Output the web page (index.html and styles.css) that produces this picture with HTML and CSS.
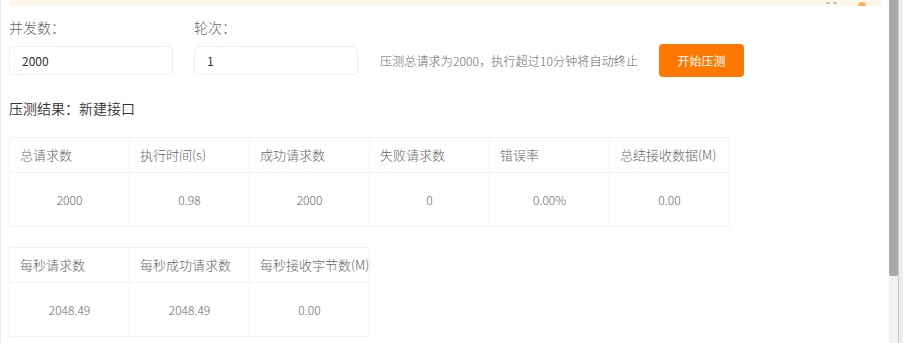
FILE: index.html
```html
<!DOCTYPE html>
<html lang="zh-CN">

<head>
  <meta charset="UTF-8" />
  <meta name="viewport" content="width=device-width, initial-scale=1.0" />
  <title>压测</title>
  <link rel="stylesheet" href="styles.css">
</head>

<body>
  <div class="app">
    <div class="main">
      <div class="notice">
        <span class="notice-mark"></span>
        <span class="notice-mark"></span>
        <span class="notice-icon"></span>
      </div>

      <div class="form-grid">
        <div class="label">并发数：</div>
        <div class="label">轮次：</div>
        <div></div>
        <div></div>
        <input class="input" type="text" value="2000" />
        <input class="input" type="text" value="1" />
        <div class="hint">压测总请求为2000，执行超过10分钟将自动终止</div>
        <div class="btn">开始压测</div>
      </div>

      <div class="result-title">压测结果：新建接口</div>

      <div class="stat-table cols-6">
        <div class="th">总请求数</div>
        <div class="th">执行时间(s)</div>
        <div class="th">成功请求数</div>
        <div class="th">失败请求数</div>
        <div class="th">错误率</div>
        <div class="th">总结接收数据(M)</div>
        <div class="td">2000</div>
        <div class="td">0.98</div>
        <div class="td">2000</div>
        <div class="td">0</div>
        <div class="td">0.00%</div>
        <div class="td">0.00</div>
      </div>

      <div class="stat-table cols-3">
        <div class="th">每秒请求数</div>
        <div class="th">每秒成功请求数</div>
        <div class="th">每秒接收字节数(M)</div>
        <div class="td">2048.49</div>
        <div class="td">2048.49</div>
        <div class="td">0.00</div>
      </div>
    </div>

    <div class="scrollbar">
      <div class="scroll-track">
        <div class="scroll-thumb"></div>
      </div>
      <div class="scroll-outer"></div>
    </div>
  </div>
</body>

</html>
```

FILE: styles.css
```css
* {
  padding: 0;
  margin: 0;
  box-sizing: border-box;
}

body {
  font-family: "Noto Sans CJK SC", "Liberation Sans", sans-serif;
  color: #666;
  background-color: #fff;
}

.app {
  display: flex;
  height: 343px;
  overflow: hidden;
}

.main {
  flex: 1;
  padding: 0 8px;
  border-left: 1px solid #e8e8e8;
}

.notice {
  display: flex;
  justify-content: flex-end;
  align-items: flex-end;
  height: 6px;
  padding-right: 15px;
  overflow: hidden;
  background-color: #fff6ea;
}

.notice-mark {
  width: 4px;
  height: 2px;
  margin-right: 3px;
  margin-bottom: 2px;
  background-color: #c8c2bb;
}

.notice-mark:nth-child(2) {
  margin-right: 21px;
}

.notice-icon {
  width: 8px;
  height: 8px;
  margin-bottom: -4px;
  border-radius: 50%;
  background-color: #f7b45a;
}

.form-grid {
  display: grid;
  grid-template-columns: 164px 164px auto auto;
  grid-template-rows: 20px 33px;
  column-gap: 21px;
  row-gap: 7px;
  justify-content: start;
  align-items: center;
  margin-top: 11px;
}

.label {
  font-size: 14px;
  font-weight: 300;
  line-height: 20px;
  color: #666;
}

.input {
  width: 164px;
  height: 29px;
  padding: 0 12px;
  font-family: inherit;
  font-size: 12px;
  color: #333;
  border: 1px solid #f5eee7;
  border-radius: 4px;
  outline: none;
}

.hint {
  margin-left: 1px;
  font-size: 12px;
  font-weight: 300;
  letter-spacing: 0.15px;
  color: #666;
  white-space: nowrap;
}

.btn {
  width: 85px;
  height: 33px;
  font-size: 12px;
  line-height: 33px;
  text-align: center;
  color: #fff;
  background-color: #fd7800;
  border-radius: 4px;
  cursor: pointer;
}

.result-title {
  margin-top: 21px;
  font-size: 14px;
  font-weight: 350;
  line-height: 20px;
  color: #333;
}

.stat-table {
  display: grid;
  width: max-content;
  margin-top: 19px;
  border-top: 1px solid #f2f2f2;
  border-left: 1px solid #f2f2f2;
}

.stat-table+.stat-table {
  margin-top: 20px;
}

.cols-6 {
  grid-template-columns: repeat(6, 120px);
}

.cols-3 {
  grid-template-columns: repeat(3, 120px);
}

.th,
.td {
  border-right: 1px solid #f2f2f2;
  border-bottom: 1px solid #f2f2f2;
  font-size: 12px;
  font-weight: 300;
  color: #666;
  white-space: nowrap;
}

.th {
  height: 35px;
  padding-left: 10px;
  font-size: 13px;
  line-height: 34px;
}

.td {
  height: 54px;
  line-height: 53px;
  text-align: center;
}

.scrollbar {
  display: flex;
  width: 14px;
}

.scroll-track {
  width: 9px;
  background-color: #f1f1f1;
}

.scroll-thumb {
  height: 276px;
  background-color: #a8a8a8;
  border-radius: 0 0 2px 2px;
}

.scroll-outer {
  flex: 1;
  border-left: 1px solid #c9c9c9;
  background-color: #ececec;
}
```
